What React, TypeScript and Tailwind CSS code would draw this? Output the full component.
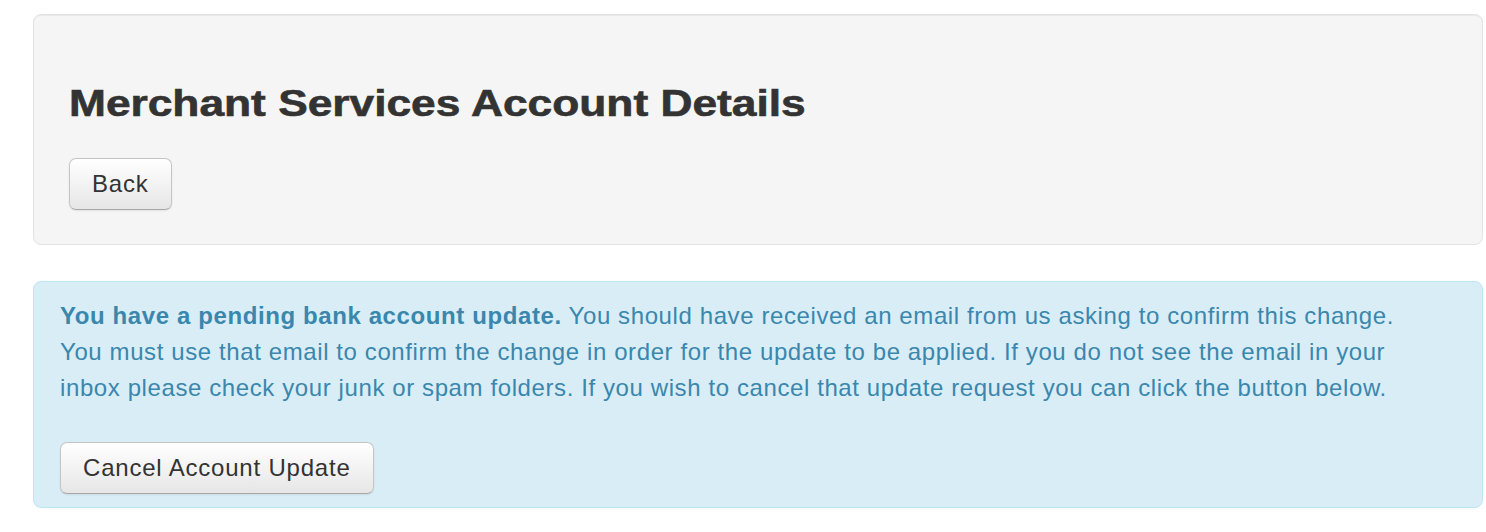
const btn =
  "rounded-[7px] border border-[#c5c5c5] border-b-[#a8a8a8] bg-gradient-to-b from-white to-[#e6e6e6] px-[22px] py-[7px] text-[24px] leading-[36px] tracking-[0.8px] text-[#333] shadow-[inset_0_1px_0_rgba(255,255,255,0.2),0_1px_2px_rgba(0,0,0,0.08)]";

export default function App() {
  return (
    <div
      className="min-h-[532px] bg-white pt-[14px]"
      style={{ fontFamily: '"Liberation Sans", Arial, Helvetica, sans-serif' }}
    >
      <div className="ml-[33px] w-[1450px]">
        <div className="rounded-[8px] border border-[#e3e3e3] bg-[#f5f5f5] px-[35px] pt-[35px] pb-[34px] shadow-[inset_0_1px_1px_rgba(0,0,0,0.05)]">
          <h2 className="mt-[34px] mb-[34px] text-[36px] leading-[40px] font-bold text-[#333]">
            {/* heading face is wider than Arial bold, stretch to match */}
            <span className="inline-block origin-left scale-x-[1.23] [-webkit-text-stroke:0.6px_#333]">
              Merchant Services Account Details
            </span>
          </h2>
          <button className={btn}>Back</button>
        </div>

        <div className="mt-[36px] rounded-[8px] border border-[#bce8f1] bg-[#d9edf7] pt-[16px] pr-[70px] pb-[13px] pl-[26px] text-[24px] leading-[36px] tracking-[0.6px] text-[#3a87ad]">
          <p className="mb-[36px]">
            <strong>You have a pending bank account update.</strong> You should
            have received an email from us asking to confirm this change. You
            must use that email to confirm the change in order for the update
            to be applied. If you do not see the email in your inbox please
            check your junk or spam folders. If you wish to cancel that update
            request you can click the button below.
          </p>
          <button className={btn}>Cancel Account Update</button>
        </div>
      </div>
    </div>
  );
}
